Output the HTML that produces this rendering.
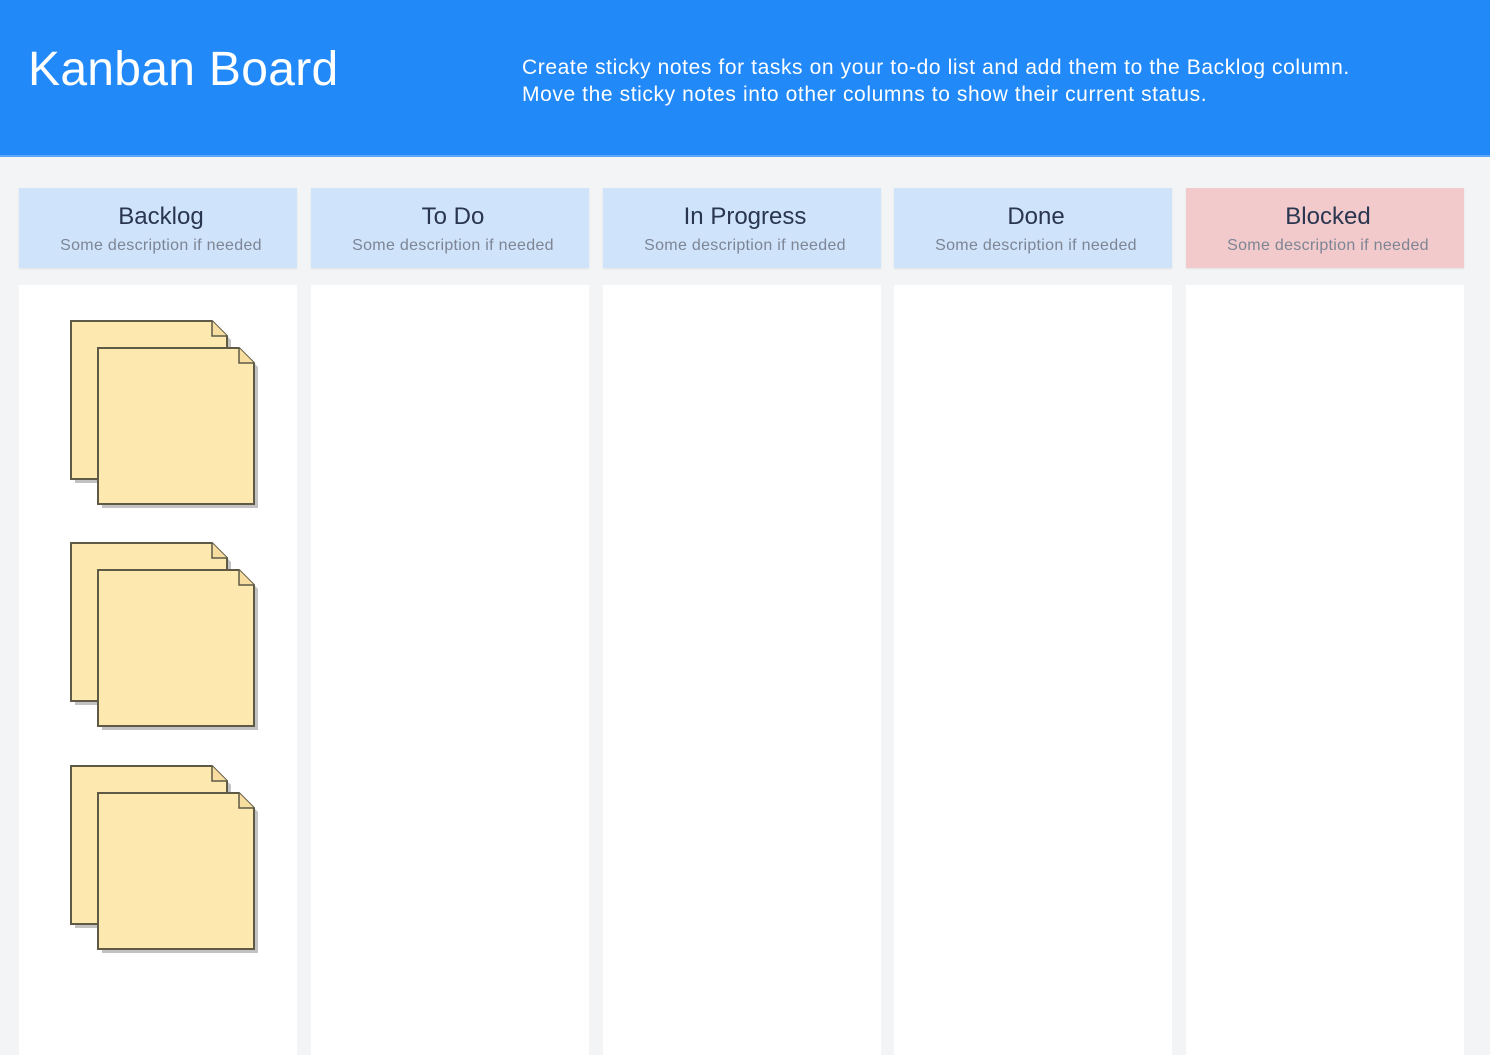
<!DOCTYPE html>
<html><head><style>
body{margin:0;width:1490px;height:1052px;background:#f3f4f6;font-family:"Liberation Sans",sans-serif;overflow:hidden;position:relative}
.hdr{position:absolute;left:0;top:0;width:1490px;height:155px;background:#2189f8;border-bottom:2px solid #5aa7f5}
.t{position:absolute;left:28px;top:42px;color:#fff;font-size:48px;letter-spacing:0.3px}
.d{position:absolute;left:522px;top:54px;color:#fff;font-size:21px;line-height:27px;letter-spacing:0.6px}
.ch{position:absolute;top:188px;width:272px;padding-left:6px;height:80px;background:#cfe3fb;text-align:center;box-shadow:0 1px 2px rgba(0,0,0,.08)}
.ch b{display:block;font-weight:normal;font-size:24px;color:#2a3550;margin-top:15px}
.ch i{display:block;font-style:normal;font-size:16px;color:#7d8594;margin-top:6px;letter-spacing:0.3px}
.cb{position:absolute;top:285px;width:278px;height:770px;background:#fff}
</style></head><body>
<div class="hdr"><div class="t">Kanban Board</div>
<div class="d">Create sticky notes for tasks on your to-do list and add them to the Backlog column.<br>Move the sticky notes into other columns to show their current status.</div></div>
<div class="ch" style="left:19px"><b>Backlog</b><i>Some description if needed</i></div>
<div class="ch" style="left:311px"><b>To Do</b><i>Some description if needed</i></div>
<div class="ch" style="left:603px"><b>In Progress</b><i>Some description if needed</i></div>
<div class="ch" style="left:894px"><b>Done</b><i>Some description if needed</i></div>
<div class="ch" style="left:1186px;background:#f2cacb"><b>Blocked</b><i>Some description if needed</i></div>
<div class="cb" style="left:19px"></div><div class="cb" style="left:311px"></div><div class="cb" style="left:603px"></div><div class="cb" style="left:894px"></div><div class="cb" style="left:1186px"></div>
<svg style="position:absolute;left:0;top:0" width="300" height="1052">
<defs><g id="n">
<path d="M75 325 H216 L231 340 V483 H75Z" fill="#9a9a9a" opacity=".6"/>
<path d="M71 321 H212 L227 336 V479 H71Z" fill="#fde9b0" stroke="#5f5a45" stroke-width="2"/>
<path d="M212 321 V336 H227" fill="#f7dea0" stroke="#5f5a45" stroke-width="1.5"/>
<path d="M102 352 H243 L258 367 V508 H102Z" fill="#9a9a9a" opacity=".6"/>
<path d="M98 348 H239 L254 363 V504 H98Z" fill="#fde9b0" stroke="#5f5a45" stroke-width="2"/>
<path d="M239 348 V363 H254" fill="#f7dea0" stroke="#5f5a45" stroke-width="1.5"/>
</g></defs>
<use href="#n"/><use href="#n" y="222"/><use href="#n" y="445"/>
</svg>
</body></html>
